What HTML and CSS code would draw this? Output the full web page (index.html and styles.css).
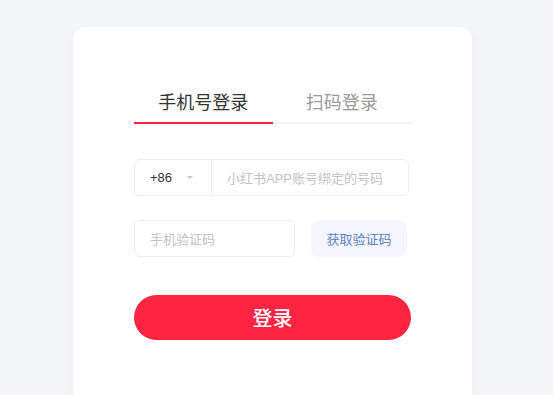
FILE: index.html
```html
<!DOCTYPE html>
<html lang="zh-CN">
<head>
<meta charset="utf-8">
<title>登录</title>
<link rel="stylesheet" href="styles.css">
</head>
<body>
<div class="page">
  <div class="card">
    <div class="tabs">
      <div class="tab active">手机号登录</div>
      <div class="tab">扫码登录</div>
    </div>
    <div class="phone-row">
      <div class="country">
        <span class="code">+86</span>
        <span class="caret"></span>
      </div>
      <div class="phone-input">小红书APP账号绑定的号码</div>
    </div>
    <div class="code-row">
      <div class="code-input">手机验证码</div>
      <div class="code-btn">获取验证码</div>
    </div>
    <div class="login-btn">登录</div>
  </div>
</div>
</body>
</html>
```

FILE: styles.css
```css
html, body {
  margin: 0;
  padding: 0;
  background: #f3f6f9;
  font-family: "Liberation Sans", "Noto Sans CJK SC", sans-serif;
}
.page {
  display: flex;
  padding-top: 27px;
  padding-left: 73px;
  height: 368px;
  overflow: hidden;
}
.card {
  width: 277px;
  height: 400px;
  background: #fff;
  border-radius: 12px;
  padding: 63px 61px 0 61px;
  box-shadow: 0 2px 10px rgba(0, 0, 0, 0.03);
}
.tabs {
  display: flex;
}
.tab {
  flex: 1;
  text-align: center;
  font-size: 18px;
  line-height: 26px;
  padding-bottom: 6px;
  color: #9a9a9a;
  border-bottom: 2px solid #f2f2f2;
}
.tab.active {
  color: #333;
  border-bottom-color: #ff2442;
}
.phone-row {
  margin-top: 35px;
  width: 273px;
  height: 35px;
  border: 1px solid #eeeeee;
  border-radius: 6px;
  display: flex;
  align-items: stretch;
}
.country {
  width: 61px;
  padding-left: 15px;
  border-right: 1px solid #eeeeee;
  display: flex;
  align-items: center;
  gap: 15px;
}
.code {
  font-size: 13px;
  color: #333;
}
.caret {
  width: 0;
  height: 0;
  border-left: 3px solid transparent;
  border-right: 3px solid transparent;
  border-top: 3px solid #c8c8c8;
}
.phone-input {
  padding-left: 15px;
  display: flex;
  align-items: center;
  font-size: 13px;
  color: #c2c2c2;
}
.code-row {
  margin-top: 24px;
  display: flex;
  gap: 16px;
}
.code-input {
  width: 144px;
  height: 35px;
  border: 1px solid #eeeeee;
  border-radius: 6px;
  padding-left: 15px;
  display: flex;
  align-items: center;
  font-size: 13px;
  color: #c2c2c2;
}
.code-btn {
  width: 96px;
  height: 37px;
  border-radius: 8px;
  background: #f3f6fd;
  color: #5f7fc4;
  font-size: 13px;
  display: flex;
  align-items: center;
  justify-content: center;
}
.login-btn {
  margin-top: 38px;
  height: 45px;
  border-radius: 23px;
  background: #ff2442;
  color: #fff;
  font-size: 20px;
  font-weight: 500;
  display: flex;
  align-items: center;
  justify-content: center;
}
```
